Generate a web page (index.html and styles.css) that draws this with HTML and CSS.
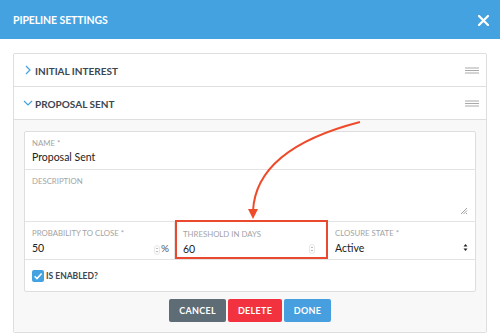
FILE: index.html
```html
<!DOCTYPE html>
<html>
<head>
<meta charset="utf-8">
<link rel="stylesheet" href="styles.css">
</head>
<body>
<div class="header">
  <div class="title">PIPELINE SETTINGS</div>
  <svg class="close" width="11" height="11" viewBox="0 0 11 11"><path d="M1 1L10 10M10 1L1 10" stroke="#fff" stroke-width="2.2" stroke-linecap="square"/></svg>
</div>
<div class="body">
  <div class="panel">
    <div class="row">
      <svg class="chev" width="8" height="10" viewBox="0 0 8 10"><path d="M2 1L6 5L2 9" fill="none" stroke="#44a2e0" stroke-width="1.2"/></svg>
      <span class="row-title">INITIAL INTEREST</span>
      <svg class="burger" width="14" height="7" viewBox="0 0 14 7"><path d="M0 1H14M0 3.5H14M0 6H14" stroke="#a9a9a9" stroke-width="1.2"/></svg>
    </div>
    <div class="row">
      <svg class="chev" width="10" height="8" viewBox="0 0 10 8"><path d="M1 2L5 6L9 2" fill="none" stroke="#44a2e0" stroke-width="1.2"/></svg>
      <span class="row-title">PROPOSAL SENT</span>
      <svg class="burger" width="14" height="7" viewBox="0 0 14 7"><path d="M0 1H14M0 3.5H14M0 6H14" stroke="#a9a9a9" stroke-width="1.2"/></svg>
    </div>
    <div class="content">
      <div class="form">
        <div class="field name">
          <div class="label">NAME *</div>
          <div class="value">Proposal Sent</div>
        </div>
        <div class="field desc">
          <div class="label">DESCRIPTION</div>
          <svg class="resize" width="8" height="8" viewBox="0 0 8 8"><path d="M7 1L1 7M7 3.5L3.5 7M7 6L6 7" stroke="#888" stroke-width="0.8"/></svg>
        </div>
        <div class="triple">
          <div class="field col first">
            <div class="label">PROBABILITY TO CLOSE *</div>
            <div class="value-row">
              <span class="value">50</span>
              <span class="suffix">
                <svg class="spin" width="6" height="10" viewBox="0 0 6 10"><rect x="0.5" y="0.5" width="5" height="9" rx="2.5" fill="none" stroke="#d6d6d6" stroke-width="0.6"/><path d="M1.6 4L3 2.4L4.4 4Z M1.6 6L3 7.6L4.4 6Z" fill="#b5b5b5"/></svg>
                <span class="pct">%</span>
              </span>
            </div>
          </div>
          <div class="field col highlight">
            <div class="label">THRESHOLD IN DAYS</div>
            <div class="value-row">
              <span class="value">60</span>
              <svg class="spin" width="6" height="10" viewBox="0 0 6 10"><rect x="0.5" y="0.5" width="5" height="9" rx="2.5" fill="none" stroke="#d6d6d6" stroke-width="0.6"/><path d="M1.6 4L3 2.4L4.4 4Z M1.6 6L3 7.6L4.4 6Z" fill="#b5b5b5"/></svg>
            </div>
          </div>
          <div class="field col">
            <div class="label">CLOSURE STATE *</div>
            <div class="value-row">
              <span class="value">Active</span>
              <svg class="sel" width="5" height="9" viewBox="0 0 5 9"><path d="M0.5 3.6L2.5 1L4.5 3.6Z M0.5 5.4L2.5 8L4.5 5.4Z" fill="#222"/></svg>
            </div>
          </div>
        </div>
        <div class="check-row">
          <span class="checkbox"><svg width="12" height="12" viewBox="0 0 12 12"><path d="M2.6 6.2L5 8.6L9.6 3.6" fill="none" stroke="#fff" stroke-width="1.5"/></svg></span>
          <span class="check-label">IS ENABLED?</span>
        </div>
      </div>
      <div class="buttons">
        <button class="btn cancel">CANCEL</button>
        <button class="btn delete">DELETE</button>
        <button class="btn done">DONE</button>
      </div>
    </div>
  </div>
</div>
<svg class="arrow" width="500" height="334" viewBox="0 0 500 334">
  <path d="M360 122C290 140 255 170 253 211" fill="none" stroke="#ee4b2b" stroke-width="2"/>
  <path d="M248 209L258 209L253 219Z" fill="#ee4b2b"/>
</svg>
</body>
</html>
```
FILE: styles.css
```css
* { box-sizing: border-box; }
html, body { margin: 0; padding: 0; }
body {
  width: 500px;
  height: 334px;
  overflow: hidden;
  font-family: Lato, "Open Sans", sans-serif;
  background: #fff;
  position: relative;
}
.header {
  height: 39px;
  background: #44a2e0;
  display: flex;
  align-items: center;
  justify-content: space-between;
  padding: 0 11px 0 13px;
}
.title {
  color: #fff;
  font-weight: 700;
  font-size: 10.5px;
  letter-spacing: -0.1px;
}
.close { display: block; margin-top: 1px; }
.body {
  padding: 14px 13px 0 13px;
}
.panel {
  border: 1px solid #dedede;
  border-radius: 2px;
}
.row {
  height: 33px;
  border-bottom: 1px solid #dedede;
  display: flex;
  align-items: center;
  padding: 0 7px 0 9px;
}
.row .chev { display: block; margin-right: 2px; }
.row:first-child .chev { margin-left: 1px; margin-right: 3px; }
.row-title {
  font-size: 10px;
  font-weight: 700;
  color: #3b4651;
  flex: 1;
  padding-top: 1px;
}
.burger { display: block; }
.content {
  background: #f8f8f8;
  padding: 11px 10px 10px 10px;
}
.form {
  background: #fff;
  border: 1px solid #dedede;
  border-radius: 2px;
}
.field {
  padding: 6px 8px 0 7px;
  border-bottom: 1px solid #e3e3e3;
  position: relative;
}
.name { height: 38px; }
.desc { height: 52px; }
.label {
  font-size: 7.8px;
  color: #a3a3a3;
  line-height: 10px;
}
.value {
  font-size: 10.5px;
  color: #222;
  line-height: 14px;
  margin-top: 2px;
  display: block;
}
.resize {
  position: absolute;
  right: 7px;
  bottom: 6px;
}
.triple {
  display: grid;
  grid-template-columns: 150px 153px 1fr;
  height: 38px;
  border-bottom: 1px solid #e3e3e3;
}
.triple .field {
  border-bottom: none;
  height: 37px;
}
.col.first { border-right: 1px solid #e3e3e3; }
.col.highlight {
  border: 2px solid #e8492f;
  margin-top: -2px;
  height: 39px;
  padding-top: 7px;
  padding-left: 6px;
}
.value-row {
  display: flex;
  align-items: center;
  justify-content: space-between;
}
.value-row .value { margin-top: 3px; }
.suffix { display: flex; align-items: center; margin-top: 3px; margin-right: -3px; }
.spin { display: block; margin-top: 3px; }
.pct { font-size: 10px; color: #555; margin-left: 1px; }
.col.highlight .spin { margin-right: 3px; }
.sel { display: block; margin-top: 1px; margin-right: -1px; }
.check-row {
  height: 31px;
  display: flex;
  align-items: center;
  padding-left: 7px;
}
.checkbox {
  width: 12px;
  height: 12px;
  border-radius: 2px;
  background: #44a2e0;
  display: block;
  margin-right: 2px;
}
.checkbox svg { display: block; }
.check-label {
  font-size: 8.5px;
  font-weight: 700;
  color: #3b4651;
}
.buttons {
  display: flex;
  justify-content: center;
  gap: 2px;
  margin-top: 7px;
}
.btn {
  height: 23px;
  border: none;
  border-radius: 2px;
  color: #fff;
  font-family: Lato, "Open Sans", sans-serif;
  font-weight: 700;
  font-size: 9px;
  letter-spacing: 0.3px;
  padding: 0;
}
.cancel { background: #5e6c75; width: 57px; }
.delete { background: #f2333f; width: 54px; }
.done { background: #479fe0; width: 47px; }
.arrow {
  position: absolute;
  left: 0;
  top: 0;
  pointer-events: none;
}
```
